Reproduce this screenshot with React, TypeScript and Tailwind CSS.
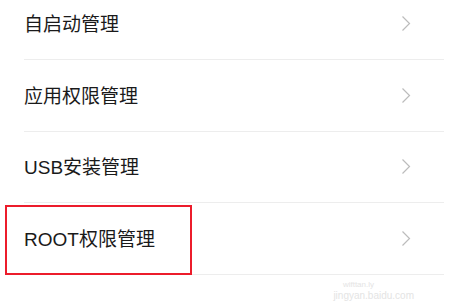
import React from 'react';

const items = ['自启动管理', '应用权限管理', 'USB安装管理', 'ROOT权限管理'];

const Chevron: React.FC = () => (
  <svg width="10" height="17" viewBox="0 0 10 17" fill="none" className="shrink-0">
    <path d="M1.5 1.5 L8.5 8.5 L1.5 15.5" stroke="#bcbcbc" strokeWidth="1.2" />
  </svg>
);

export default function App() {
  return (
    <div
      className="relative w-[450px] h-[306px] overflow-hidden bg-white"
      style={{ fontFamily: '"Liberation Sans", "Noto Sans CJK SC", sans-serif' }}
    >
      <div className="-mt-[11.5px]">
        {items.map((label) => (
          <div
            key={label}
            className="ml-[24px] mr-[6px] h-[71.5px] flex items-center justify-between border-b border-[#ededed] pr-[33px]"
          >
            <span className="mt-[2px] text-[19px] text-[#1a1a1a] leading-none">{label}</span>
            <Chevron />
          </div>
        ))}
      </div>

      {/* annotation box */}
      <div className="absolute left-[5px] top-[205px] w-[187px] h-[70px] border-2 border-[#ec1c2b]" />

      {/* watermark */}
      <div className="absolute right-[36px] bottom-[4px] text-right leading-tight text-[#e4e4e4]">
        <div className="text-[8px] pr-[40px]">wifttan.ly</div>
        <div className="text-[10px]">jingyan.baidu.com</div>
      </div>
    </div>
  );
}
